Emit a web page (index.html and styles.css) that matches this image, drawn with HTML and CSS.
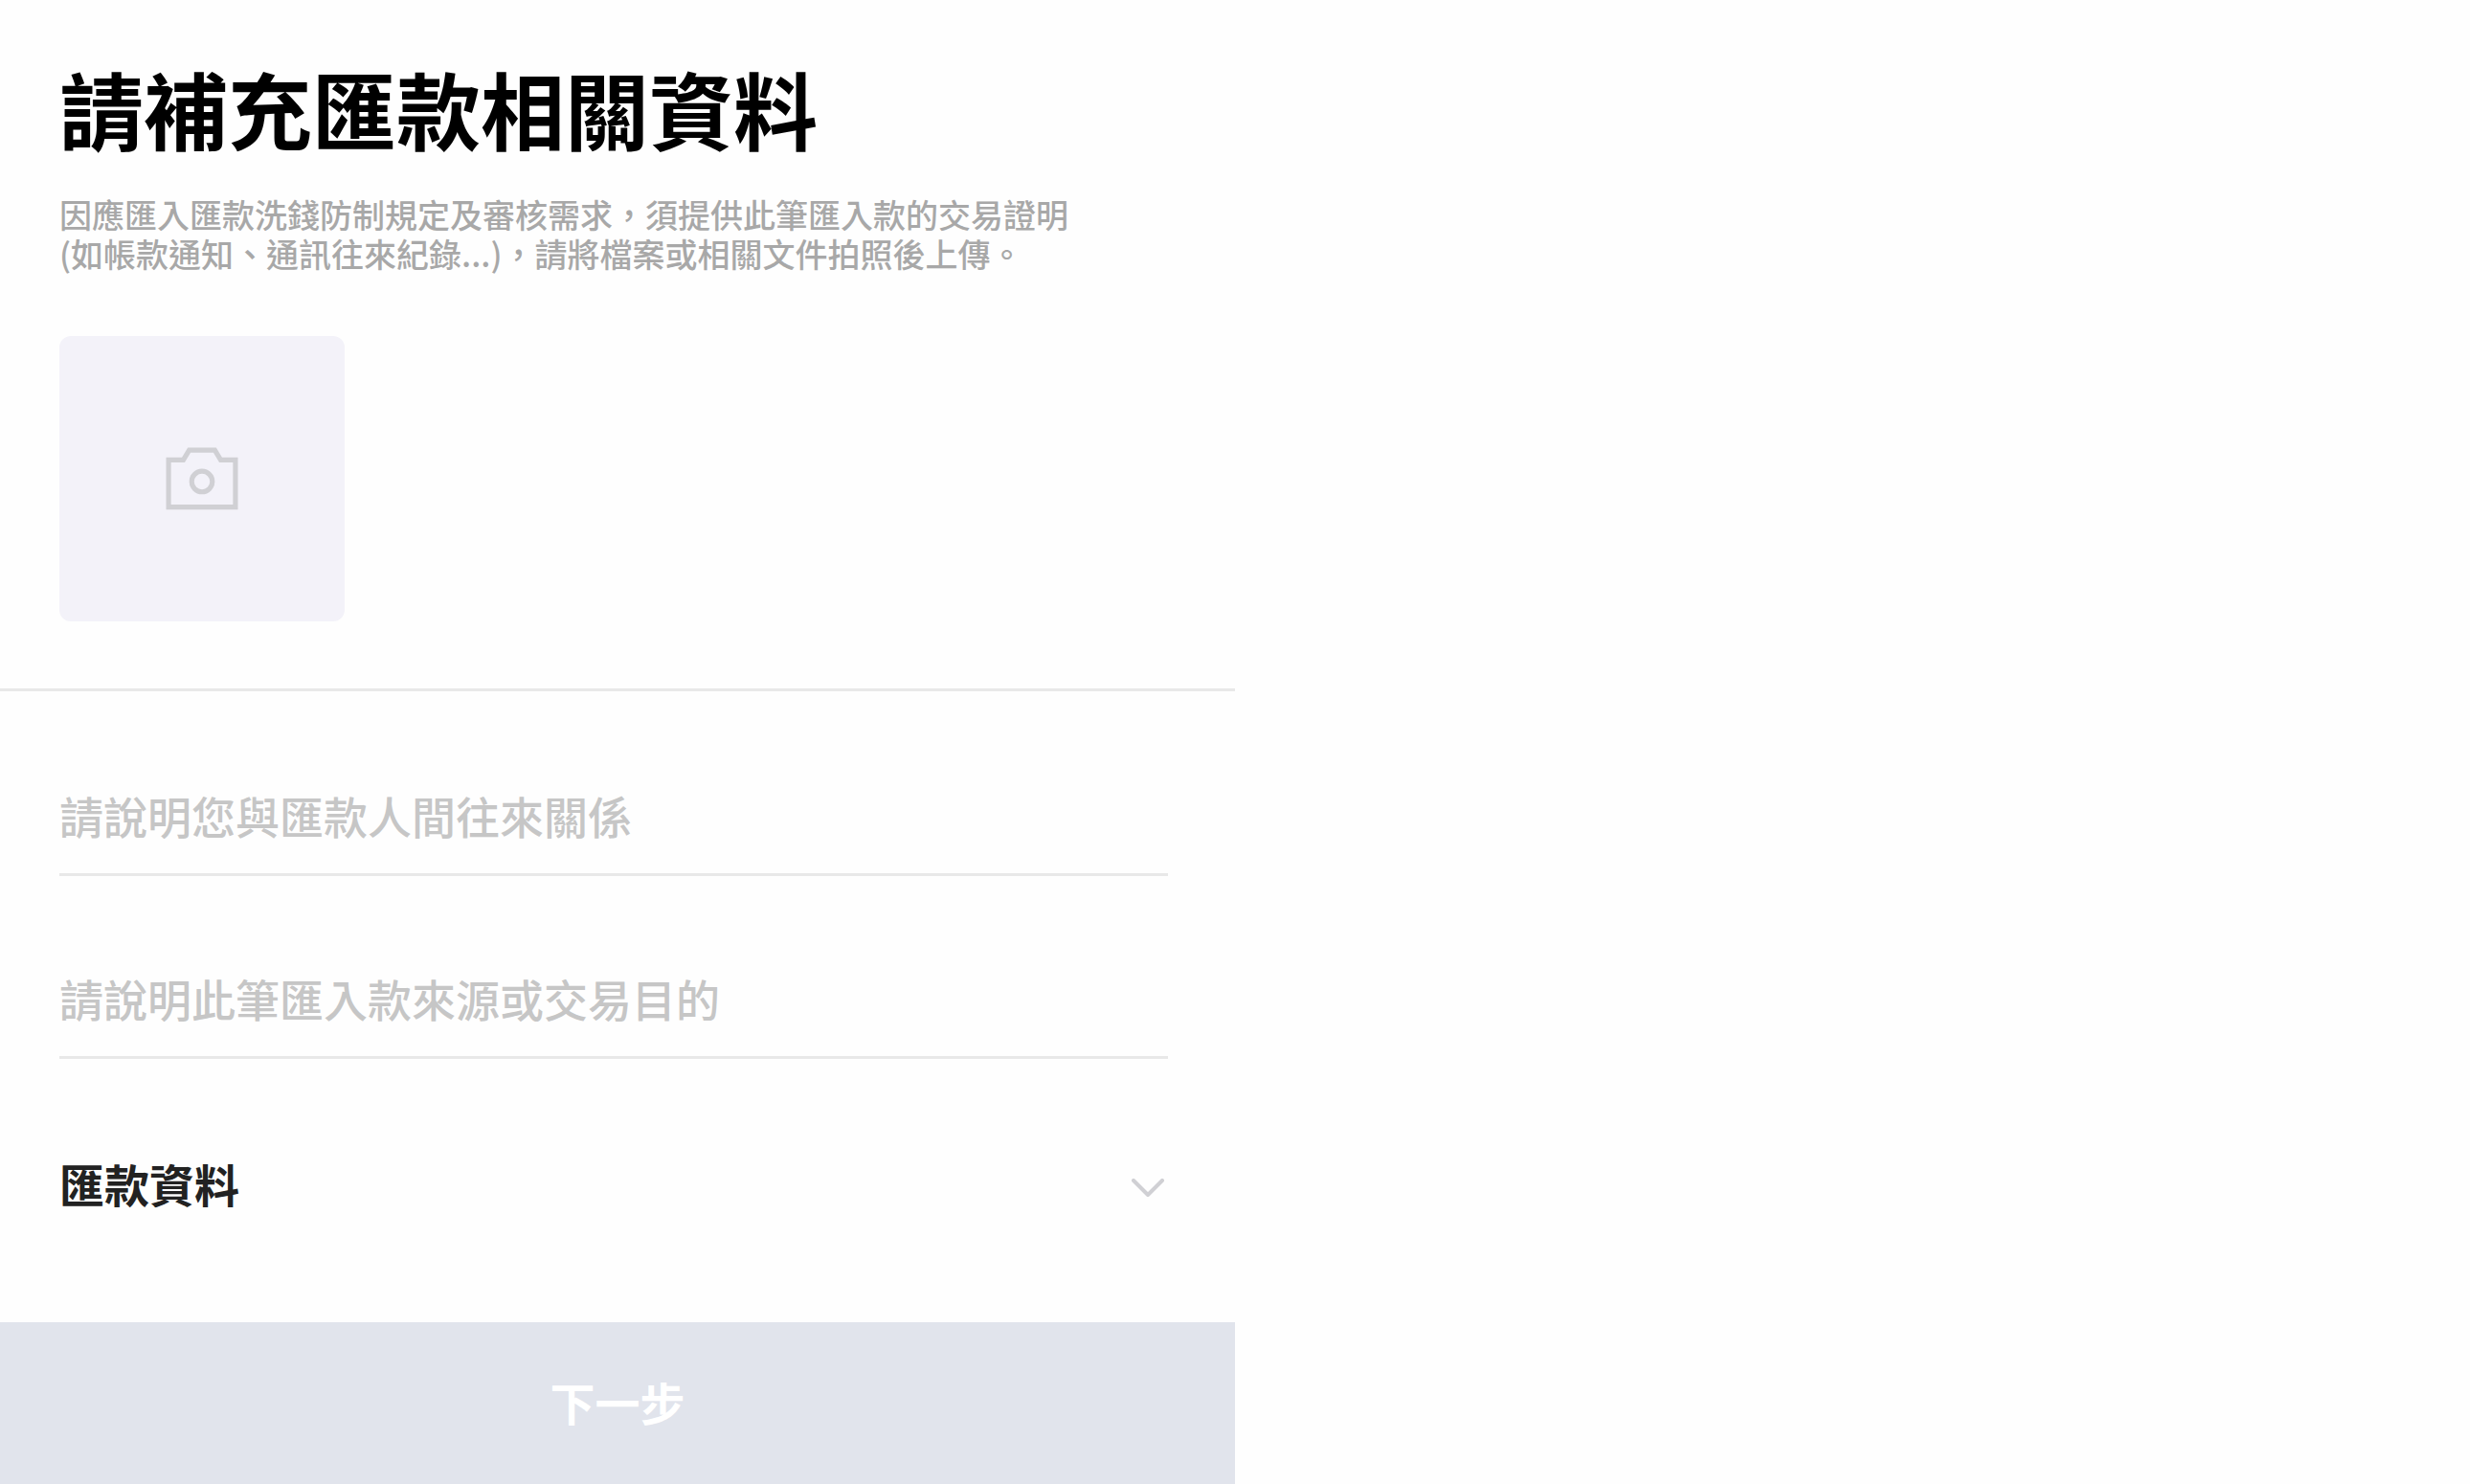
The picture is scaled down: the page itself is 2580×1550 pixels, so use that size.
FILE: index.html
```html
<!DOCTYPE html>
<html lang="zh-Hant">
<head>
    <meta charset="UTF-8">
    <meta name="viewport" content="width=device-width, initial-scale=1.0">
    <title>請補充匯款相關資料</title>
    <link rel="stylesheet" href="styles.css">
</head>
<body>

    <form class="container">
        <section class="intro">
            <h1>請補充匯款相關資料</h1>
            <p class="description">
                因應匯入匯款洗錢防制規定及審核需求，須提供此筆匯入款的交易證明<br>
                (如帳款通知、通訊往來紀錄...)，請將檔案或相關文件拍照後上傳。
            </p>
            <button type="button" class="upload" aria-label="上傳照片">
                <svg class="camera" viewBox="0 0 74 64" fill="none" stroke="currentColor" stroke-width="5">
                    <path d="M3 13H18L24 3H50L56 13H71V61H3Z"/>
                    <circle cx="37" cy="35" r="10.5"/>
                </svg>
            </button>
        </section>

        <section class="details">
            <input type="text" class="field" aria-label="請說明您與匯款人間往來關係" placeholder="請說明您與匯款人間往來關係">
            <input type="text" class="field" aria-label="請說明此筆匯入款來源或交易目的" placeholder="請說明此筆匯入款來源或交易目的">
            <button type="button" class="toggle" aria-expanded="false">
                <span>匯款資料</span>
                <svg class="chevron" viewBox="0 0 36 20" fill="none" stroke="currentColor" stroke-width="4" stroke-linecap="round" stroke-linejoin="round">
                    <path d="M3 2L18 17L33 2"/>
                </svg>
            </button>
        </section>

        <button type="submit" class="next" disabled>下一步</button>
    </form>

</body>
</html>
```

FILE: styles.css
```css
* {
    box-sizing: border-box;
}
body {
    margin: 0;
    background-color: #fefefe;
    font-family: "Noto Sans CJK TC", sans-serif;
}
button, input {
    font-family: inherit;
    border: none;
    padding: 0;
    background: none;
}
.container {
    display: flex;
    flex-direction: column;
    width: 50%;
    min-height: 100vh;
}
.intro {
    padding: 60px 62px 70px;
    border-bottom: 3px solid #e8e8e8;
}
h1 {
    margin: 0 0 39px;
    font-size: 88px;
    line-height: 104px;
    font-weight: 700;
    color: #000;
}
.description {
    margin: 0 0 66px;
    font-size: 34px;
    line-height: 41px;
    font-weight: 500;
    color: #a8a8a8;
}
.upload {
    display: flex;
    align-items: center;
    justify-content: center;
    width: 298px;
    height: 298px;
    border-radius: 12px;
    background-color: #f3f2f9;
    color: #d0d0d4;
    cursor: pointer;
}
.camera {
    width: 76px;
}
.details {
    display: flex;
    flex-direction: column;
    gap: 71px;
    padding: 73px 70px 0 62px;
}
.field {
    width: 100%;
    height: 120px;
    padding-bottom: 6px;
    font-size: 46px;
    font-weight: 500;
    color: #222;
    border-bottom: 3px solid #e8e8e8;
    border-radius: 0;
    outline: none;
}
.field::placeholder {
    color: #c6c6c6;
    opacity: 1;
}
.toggle {
    display: flex;
    align-items: center;
    justify-content: space-between;
    height: 120px;
    padding: 0 3px 4px 0;
    font-size: 47px;
    font-weight: 700;
    color: #222;
    cursor: pointer;
}
.chevron {
    width: 36px;
    margin-top: 12px;
    color: #d0d0d4;
}
.next {
    height: 169px;
    margin-top: auto;
    padding-bottom: 4px;
    font-size: 47px;
    font-weight: 700;
    color: #fff;
    background-color: #e1e4ec;
}
```
